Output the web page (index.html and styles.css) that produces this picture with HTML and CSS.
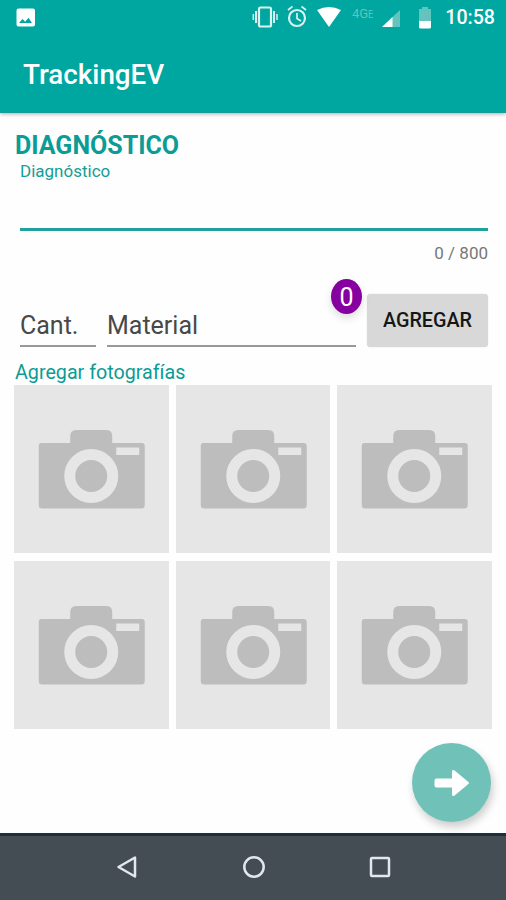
FILE: index.html
```html
<!DOCTYPE html>
<html lang="es">
<head>
<meta charset="utf-8">
<title>TrackingEV</title>
<link rel="stylesheet" href="styles.css">
</head>
<body>
<svg width="0" height="0" class="defs" aria-hidden="true">
  <symbol id="camera" viewBox="0 0 154 168">
    <path fill="#bdbdbd" d="M27 58H56V51Q56 45 62 45H92Q98 45 98 51V58H127.500Q130.500 58 130.500 61V120Q130.500 123.500 127 123.500H28Q24.500 123.500 24.500 120V61Q24.500 58 27 58Z"/>
    <circle cx="77" cy="91" r="21.500" fill="none" stroke="#e6e6e6" stroke-width="11"/>
    <path fill="#e6e6e6" d="M102 62.500H125V70H102Z"/>
  </symbol>
</svg>
<header class="top">
  <div class="status">
    <svg class="photo" width="20" height="20" viewBox="0 0 20 20"><path fill="#fff" fill-rule="evenodd" d="M2.500 .5H17Q19 .5 19 2.500V16.500Q19 18.500 17 18.500H2.500Q.5 18.500 .5 16.500V2.500Q.5 .5 2.500 .5ZM3 15H16L12.500 9.700L9.200 13.700L6.500 11Z"/></svg>
    <svg class="indicators" width="180" height="26" viewBox="0 0 180 26">
      <g fill="none" stroke="#d9f3f0">
        <rect x="6" y="4.500" width="12" height="19" rx="1.500" stroke-width="2.200"/>
        <path stroke-width="2" d="M3 8V20M21 8V20"/><path stroke-width="1.500" d="M.3 11V17M24 11V17"/>
        <circle cx="44" cy="15" r="8" stroke-width="2.200"/><path stroke-width="1.700" d="M44 10V15.500L48 18M35 7L39.500 3.500M48.500 3.500L53 7"/>
      </g>
      <path fill="#fff" d="M64 7Q76 1 88 7L76 24Z"/>
      <path fill="#62c4bd" d="M147 7V24H129Z"/><path fill="#fff" d="M139.500 14V24H129Z"/>
      <path fill="#62c4bd" d="M169 4H175V6H178V18H166V6H169Z"/>
      <path fill="#fff" d="M166 18H178V24Q178 25.500 176.500 25.500H167.500Q166 25.500 166 24Z"/>
    </svg>
    <span class="network">4G<span class="generation">E</span></span>
    <time class="clock">10:58</time>
  </div>
  <h1 class="title">TrackingEV</h1>
</header>
<main class="content">
  <h2 class="heading">DIAGNÓSTICO</h2>
  <div class="diagnosis">
    <label class="label">Diagnóstico</label>
    <div class="counter">0 / 800</div>
  </div>
  <div class="form">
    <div class="field quantity">Cant.</div>
    <div class="field material">Material<span class="badge">0</span></div>
    <button class="add">AGREGAR</button>
  </div>
  <h3 class="subheading">Agregar fotografías</h3>
  <div class="gallery">
    <svg class="tile"><use href="#camera"/></svg>
    <svg class="tile"><use href="#camera"/></svg>
    <svg class="tile"><use href="#camera"/></svg>
    <svg class="tile"><use href="#camera"/></svg>
    <svg class="tile"><use href="#camera"/></svg>
    <svg class="tile"><use href="#camera"/></svg>
  </div>
  <button class="next" aria-label="Siguiente">
    <svg width="36" height="28" viewBox="0 0 36 28"><path fill="#fff" stroke="#fff" stroke-width="2" stroke-linejoin="round" d="M2.500 10.500H19V2.500Q19 1.500 20 2.300L34 14L20 25.700Q19 26.500 19 25.500V17.500H2.500Q1.500 17.500 1.500 16.500V11.500Q1.500 10.500 2.500 10.500Z"/></svg>
  </button>
</main>
<nav class="nav">
  <svg width="22" height="24" viewBox="0 0 22 24"><path d="M19 2.500V21.500L2.500 12Z"/></svg>
  <svg width="24" height="24" viewBox="0 0 24 24"><circle cx="12" cy="12" r="9.700"/></svg>
  <svg width="22" height="24" viewBox="0 0 22 24"><rect x="2" y="3" width="18" height="18" rx="1"/></svg>
</nav>
</body>
</html>
```

FILE: styles.css
```css
* { box-sizing: border-box; }
body {
  margin: 0;
  width: 506px;
  height: 900px;
  overflow: hidden;
  display: flex;
  flex-direction: column;
  background: #fefefe;
  font-family: Roboto, sans-serif;
}
.defs { position: absolute; }
h1, h2, h3 { margin: 0; }
.top {
  height: 113px;
  flex: none;
  background: #00a6a0;
  border-bottom: 1px solid #159b98;
  box-shadow: 0 1px 4px #0005;
  color: #fff;
}
.status {
  position: relative;
  height: 36px;
  display: flex;
  align-items: center;
  padding: 0 11px 0 16px;
}
.photo { margin-bottom: 1px; }
.indicators { margin: 0 0 4px 217px; overflow: visible; }
.network {
  position: absolute;
  left: 352px;
  top: 6px;
  font-size: 13px;
  line-height: 15px;
  color: #62c4bd;
}
.generation { display: inline-block; transform: scale(.7, .9); transform-origin: 0 50%; }
.clock {
  margin-left: auto;
  font-size: 19.600px;
  font-weight: 500;
  line-height: 36px;
}
.title {
  padding: 22px 0 0 23px;
  font-size: 27.800px;
  line-height: 34px;
  font-weight: 500;
}
.content {
  position: relative;
  height: 720px;
  flex: none;
  padding: 18px 14px 0 15px;
}
.heading {
  font-size: 25px;
  line-height: 30px;
  font-weight: 700;
  color: #0a9c95;
}
.diagnosis { margin: 0 4px 0 5px; }
.label {
  display: block;
  height: 70px;
  border-bottom: 3px solid #20a19d;
  font-size: 17px;
  line-height: 20px;
  color: #169d95;
}
.counter {
  padding-top: 11px;
  height: 63px;
  text-align: right;
  font-size: 17px;
  line-height: 22px;
  color: #777;
}
.form {
  display: flex;
  height: 53px;
  padding: 0 4px 0 5px;
}
.field {
  position: relative;
  height: 53px;
  border-bottom: 2px solid #999;
  font-size: 25px;
  line-height: 63px;
  color: #484848;
}
.quantity { width: 76px; margin-right: 11px; }
.material { width: 249px; margin-right: 11px; }
.badge {
  position: absolute;
  left: 224px;
  top: -15px;
  width: 31px;
  height: 35px;
  border-radius: 50%;
  background: #86009f;
  box-shadow: 0 4px 8px #0002;
  color: #fff;
  text-align: center;
  line-height: 37px;
}
.add {
  width: 121px;
  height: 53px;
  padding: 0;
  border: 0;
  border-radius: 4px;
  background: #d8d8d8;
  box-shadow: 0 0 1px #bbb;
  font: 500 19.800px Roboto, sans-serif;
  color: #161616;
}
.subheading {
  padding-top: 13px;
  height: 38px;
  font-size: 19.700px;
  line-height: 25px;
  font-weight: 400;
  color: #0a9c95;
}
.gallery {
  display: grid;
  grid-template-columns: repeat(3, 154.500px);
  grid-auto-rows: 168px;
  gap: 8px 7px;
  margin-left: -0.600px;
}
.tile { width: 154.500px; height: 168px; background: #e6e6e6; }
.next {
  position: absolute;
  left: 412px;
  top: 630px;
  width: 79px;
  height: 79px;
  padding: 0;
  border: 0;
  border-radius: 50%;
  display: flex;
  align-items: center;
  justify-content: center;
  background: #70c2b8;
  box-shadow: 2px 5px 9px #0003;
}
.nav {
  flex: none;
  height: 67px;
  display: flex;
  justify-content: space-between;
  padding: 19px 115px 0 116px;
  background: #444c54;
  border-top: 3px solid #183040;
}
.nav svg { fill: none; stroke: #e2e8ec; stroke-width: 2.500; stroke-linejoin: round; }
```
